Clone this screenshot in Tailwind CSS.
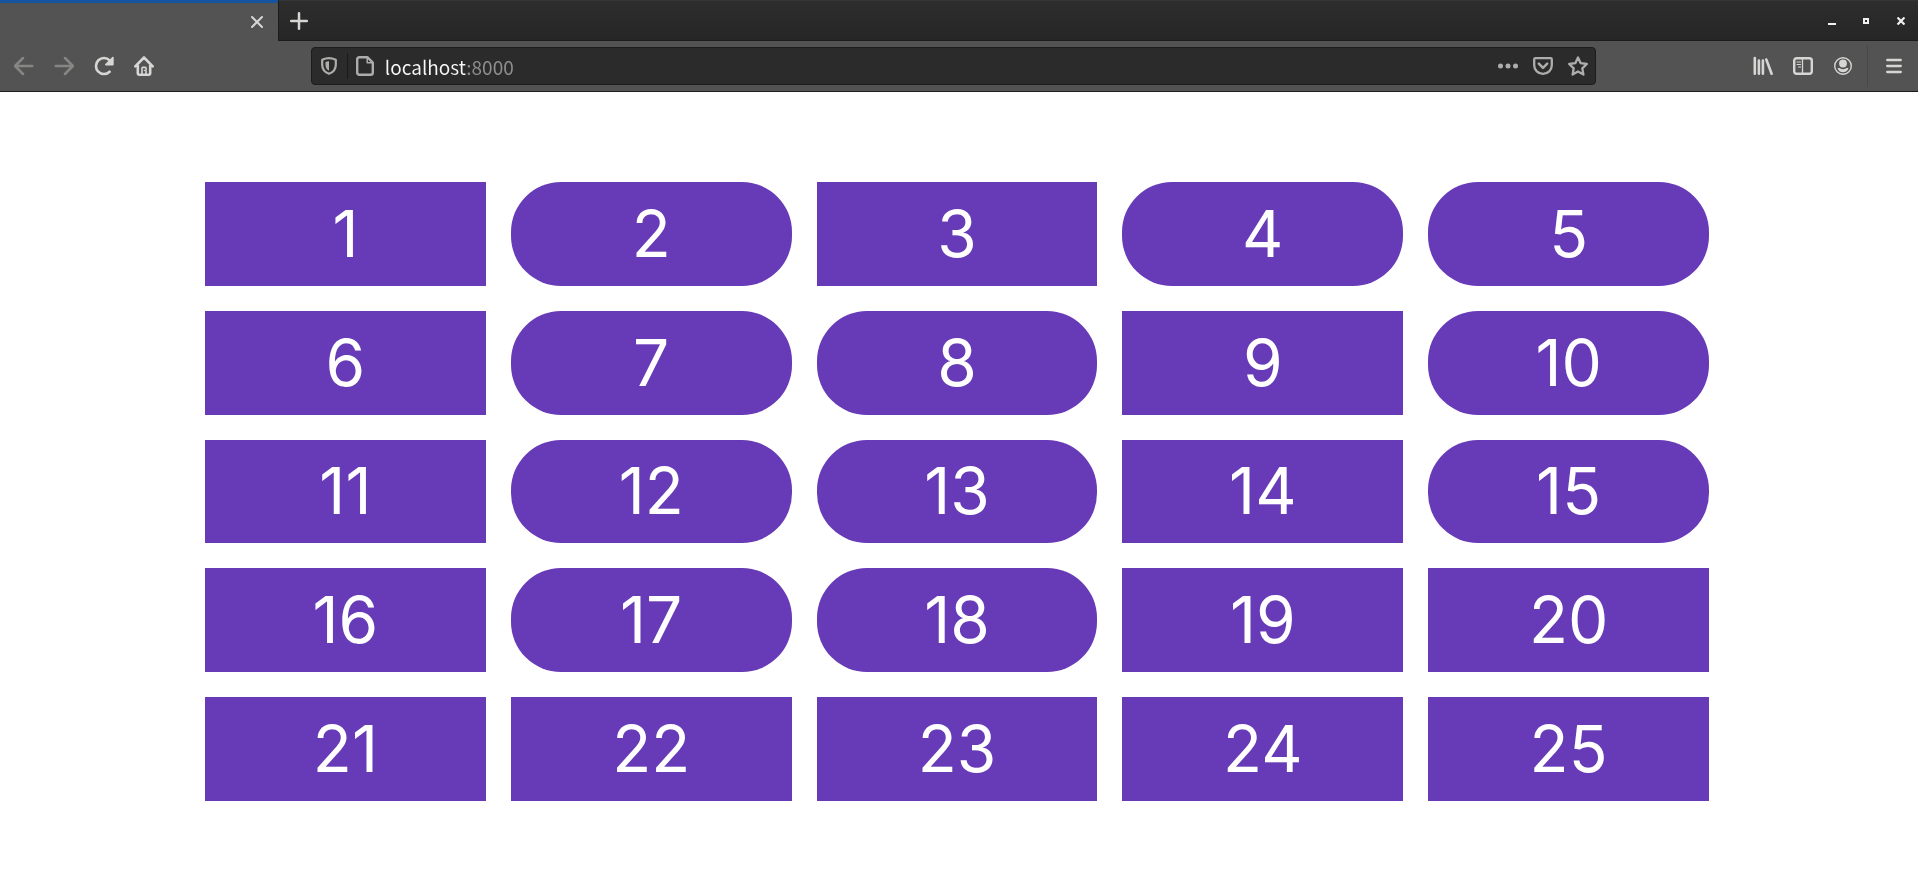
<!DOCTYPE html>
<html lang="en">
  <head>
    <meta charset="UTF-8" />
    <meta name="viewport" content="width=device-width, initial-scale=1.0" />
    <title>localhost:8000</title>
    <script src="https://cdn.jsdelivr.net/npm/@tailwindcss/browser@4"></script>
  </head>
  <body class="min-h-screen flex flex-col bg-white font-['Inter',sans-serif]">
    <header class="bg-[#535353] text-[#d6d6d4] border-b border-[#1c1c1c]">
      <!-- Tab strip -->
      <div class="flex h-[41px]">
        <div class="w-[278px] border-t-3 border-[#17549f] flex items-center justify-end">
          <button type="button" aria-label="Close tab" class="w-[42px] h-full flex items-center justify-center">
            <svg class="w-3 h-3" viewBox="0 0 12 12" fill="none" stroke="currentColor" stroke-width="2" stroke-linecap="round">
              <path d="M1 1l10 10M11 1L1 11" />
            </svg>
          </button>
        </div>
        <div class="flex-1 flex items-center justify-between border-l border-t border-b border-l-[#1c1c1c] border-t-[#343434] border-b-[#1c1c1c] bg-linear-to-b from-[#2d2d2d] to-[#262626]">
          <button type="button" aria-label="New tab" class="w-10 h-full flex items-center justify-center">
            <svg class="w-[18px] h-[18px]" viewBox="0 0 18 18" fill="none" stroke="currentColor" stroke-width="2.5" stroke-linecap="round">
              <path d="M9 1.2v15.6M1.2 9h15.6" />
            </svg>
          </button>
          <!-- Window controls -->
          <div class="flex h-full text-[#f0f0f0]">
            <button type="button" aria-label="Minimize" class="w-[34px] h-full flex items-center justify-center">
              <svg class="w-2 h-2" viewBox="0 0 8 8" fill="currentColor"><path d="M0 6h8v2H0z" /></svg>
            </button>
            <button type="button" aria-label="Maximize" class="w-[34px] h-full flex items-center justify-center">
              <svg class="w-[6px] h-[6px]" viewBox="0 0 6 6" fill="none" stroke="currentColor" stroke-width="2"><path d="M1 1h4v4H1z" /></svg>
            </button>
            <button type="button" aria-label="Close" class="w-[35px] h-full flex items-center justify-center">
              <svg class="w-2 h-2" viewBox="0 0 8 8" fill="none" stroke="currentColor" stroke-width="2.2"><path d="M.5.5l7 7M7.5.5l-7 7" /></svg>
            </button>
          </div>
        </div>
      </div>

      <!-- Navigation bar -->
      <nav class="flex items-center h-[50px] px-1">
        <button type="button" aria-label="Back" disabled class="w-10 h-10 flex items-center justify-center text-[#868684]">
          <svg class="w-5 h-5" viewBox="0 0 20 20" fill="none" stroke="currentColor" stroke-width="2.5" stroke-linecap="round" stroke-linejoin="round">
            <path d="M18.2 10H1.4M9 2L1.1 10 9 18" />
          </svg>
        </button>
        <button type="button" aria-label="Forward" disabled class="w-10 h-10 flex items-center justify-center text-[#868684]">
          <svg class="w-5 h-5" viewBox="0 0 20 20" fill="none" stroke="currentColor" stroke-width="2.5" stroke-linecap="round" stroke-linejoin="round">
            <path d="M1.8 10h16.8M11 2l7.9 8-7.9 8" />
          </svg>
        </button>
        <button type="button" aria-label="Reload" class="w-10 h-10 flex items-center justify-center">
          <svg class="w-5 h-5" viewBox="0 0 20 20" fill="none">
            <path d="M15.7 4.4A8 8 0 1 0 15.6 15.7" stroke="currentColor" stroke-width="2.6" stroke-linecap="round" />
            <path d="M19.7 1.6v7.2a.8.8 0 0 1-.8.8h-7c-.9 0-1.2-.9-.6-1.5l7-7c.6-.6 1.4-.3 1.4.5z" fill="currentColor" />
          </svg>
        </button>
        <button type="button" aria-label="Home" class="w-10 h-10 flex items-center justify-center">
          <svg class="w-5 h-5" viewBox="0 0 20 20" fill="none" stroke="currentColor" stroke-width="2.6" stroke-linecap="round" stroke-linejoin="round">
            <path d="M1.3 10.3L10 1.5l8.7 8.8M3.8 9v8.6q0 1.1 1.2 1.1h10q1.2 0 1.2-1.1V9" />
            <path d="M7.2 19v-7q0-1.5 1.5-1.5h2.6q1.5 0 1.5 1.5v7h-1.6v-6.800H8.800V19z" fill="currentColor" stroke="none" />
            <circle cx="10.4" cy="14.5" r=".7" fill="currentColor" stroke="none" />
          </svg>
        </button>

        <div class="flex-1"></div>

        <!-- Address bar -->
        <div class="w-[67.3%] h-[38px] flex items-center rounded border border-[#1d1d1d] bg-[#2b2b2b] text-[#adadac]">
          <button type="button" aria-label="Tracking protection" class="w-[35px] h-full flex items-center justify-center">
            <svg class="w-4 h-[18px]" viewBox="0 0 16 18" fill="none">
              <path d="M8 1.2c2.2 0 4.4.5 6.8 1.5v5c0 4.2-2.3 7.4-6.8 9.1C3.5 15.1 1.2 11.9 1.2 7.7v-5C3.6 1.7 5.8 1.2 8 1.2z" stroke="currentColor" stroke-width="2.2" stroke-linejoin="round" />
              <path d="M8 4.3v9.4C5.7 12.5 4.5 10.6 4.5 7.9V5C5.6 4.6 6.800 4.300 8 4.300z" fill="currentColor" />
            </svg>
          </button>
          <div class="w-px h-[26px] bg-[#1a1a1a]"></div>
          <button type="button" aria-label="Site information" class="w-[35px] h-full flex items-center justify-center">
            <svg class="w-[18px] h-5" viewBox="0 0 18 20" fill="none" stroke="currentColor" stroke-linejoin="round">
              <path d="M3.5 1.2h7.8l5.500 5.500v9.800q0 2.300-2.300 2.300h-11q-2.300 0-2.300-2.300v-13q0-2.300 2.300-2.300z" stroke-width="2.400" />
              <path d="M11.200 1.800v5h5" stroke-width="1.500" />
            </svg>
          </button>
          <!-- Host is drawn bright, the port dimmed -->
          <input
            type="text"
            id="url"
            name="url"
            aria-label="Address"
            value="localhost:8000"
            class="flex-1 h-full pl-[2px] text-[19px] font-['Noto_Sans_CJK_SC',sans-serif] outline-none bg-[linear-gradient(90deg,#f9f9f9_83px,#8f8f8f_83px)] bg-clip-text text-transparent"
          />
          <button type="button" aria-label="Page actions" class="w-[35px] h-full flex items-center justify-center">
            <svg class="w-5 h-5" viewBox="0 0 20 20" fill="currentColor">
              <circle cx="2.5" cy="10" r="2.5" /><circle cx="10" cy="10" r="2.5" /><circle cx="17.5" cy="10" r="2.5" />
            </svg>
          </button>
          <button type="button" aria-label="Save to Pocket" class="w-[35px] h-full flex items-center justify-center">
            <svg class="w-5 h-5" viewBox="0 0 20 20" fill="none" stroke="currentColor" stroke-linecap="round" stroke-linejoin="round">
              <path d="M2.4 2.2h15.200q1.200 0 1.200 1.200v5.800c0 4.900-3.900 8.600-8.800 8.600s-8.800-3.700-8.800-8.600V3.400q0-1.200 1.200-1.200z" stroke-width="2.300" />
              <path d="M5.800 7.700l4.200 4.200 4.200-4.200" stroke-width="2.500" />
            </svg>
          </button>
          <button type="button" aria-label="Bookmark this page" class="w-[35px] h-full flex items-center justify-center">
            <svg class="w-5 h-5" viewBox="0 0 20 20" fill="none" stroke="currentColor" stroke-width="2.3" stroke-linejoin="round">
              <path d="M10 1.5l2.700 5.700 6.100.8-4.500 4.300 1.100 6.300L10 15.500l-5.400 3.100 1.100-6.300L1.200 8l6.100-.8z" />
            </svg>
          </button>
        </div>

        <div class="flex-1"></div>

        <button type="button" aria-label="Library" class="w-10 h-10 flex items-center justify-center">
          <svg class="w-5 h-5" viewBox="0 0 20 20" fill="none" stroke="currentColor" stroke-width="2.6" stroke-linecap="round">
            <path d="M1.800 2v15.800M5.900 4.500v13.300M9.900 4.500v13.300M13.300 3.500l5.300 14.200" />
          </svg>
        </button>
        <button type="button" aria-label="Sidebars" class="w-10 h-10 flex items-center justify-center">
          <svg class="w-5 h-5" viewBox="0 0 20 20" fill="none" stroke="currentColor" stroke-linecap="round">
            <rect x="1.2" y="2.200" width="17.600" height="15.600" rx="2.500" stroke-width="2.400" />
            <path d="M9.500 3v14" stroke-width="1.300" />
            <path d="M4 6h3.500M4 8.500h3.500M5.500 11h2" stroke-width="1.200" />
          </svg>
        </button>
        <button type="button" aria-label="Account" class="w-10 h-10 flex items-center justify-center">
          <svg class="w-5 h-5" viewBox="0 0 20 20" fill="currentColor">
            <circle cx="10" cy="10" r="8.300" fill="none" stroke="currentColor" stroke-width="1.400" />
            <circle cx="10" cy="7.500" r="3.900" />
            <path d="M4.600 12.200c.8-.5 1.700-.3 2.300.1 1.900 1.300 4.300 1.300 6.200 0 .6-.4 1.500-.6 2.300-.1-.7 2.500-2.900 4-5.400 4s-4.700-1.500-5.400-4z" />
          </svg>
        </button>
        <div class="w-px h-[42px] ml-1 mr-1.5 bg-[#484848]"></div>
        <button type="button" aria-label="Open menu" class="w-10 h-10 flex items-center justify-center">
          <svg class="w-4 h-4" viewBox="0 0 16 16" fill="none" stroke="currentColor" stroke-width="2.3" stroke-linecap="round">
            <path d="M1.200 2h13.600M1.200 8h13.600M1.200 14h13.600" />
          </svg>
        </button>
      </nav>
    </header>

    <!-- Number grid -->
    <main class="flex-1 grid grid-cols-5 gap-[25px] pt-[90px] pb-[84px] pl-[205px] pr-[209px] text-[64px] leading-none text-white">
      <div class="flex items-center justify-center bg-[#673ab7]">1</div>
      <div class="flex items-center justify-center bg-[#673ab7] rounded-[50px]">2</div>
      <div class="flex items-center justify-center bg-[#673ab7]">3</div>
      <div class="flex items-center justify-center bg-[#673ab7] rounded-[50px]">4</div>
      <div class="flex items-center justify-center bg-[#673ab7] rounded-[50px]">5</div>

      <div class="flex items-center justify-center bg-[#673ab7]">6</div>
      <div class="flex items-center justify-center bg-[#673ab7] rounded-[50px]">7</div>
      <div class="flex items-center justify-center bg-[#673ab7] rounded-[50px]">8</div>
      <div class="flex items-center justify-center bg-[#673ab7]">9</div>
      <div class="flex items-center justify-center bg-[#673ab7] rounded-[50px]">10</div>

      <div class="flex items-center justify-center bg-[#673ab7]">11</div>
      <div class="flex items-center justify-center bg-[#673ab7] rounded-[50px]">12</div>
      <div class="flex items-center justify-center bg-[#673ab7] rounded-[50px]">13</div>
      <div class="flex items-center justify-center bg-[#673ab7]">14</div>
      <div class="flex items-center justify-center bg-[#673ab7] rounded-[50px]">15</div>

      <div class="flex items-center justify-center bg-[#673ab7]">16</div>
      <div class="flex items-center justify-center bg-[#673ab7] rounded-[50px]">17</div>
      <div class="flex items-center justify-center bg-[#673ab7] rounded-[50px]">18</div>
      <div class="flex items-center justify-center bg-[#673ab7]">19</div>
      <div class="flex items-center justify-center bg-[#673ab7]">20</div>

      <div class="flex items-center justify-center bg-[#673ab7]">21</div>
      <div class="flex items-center justify-center bg-[#673ab7]">22</div>
      <div class="flex items-center justify-center bg-[#673ab7]">23</div>
      <div class="flex items-center justify-center bg-[#673ab7]">24</div>
      <div class="flex items-center justify-center bg-[#673ab7]">25</div>
    </main>
  </body>
</html>
